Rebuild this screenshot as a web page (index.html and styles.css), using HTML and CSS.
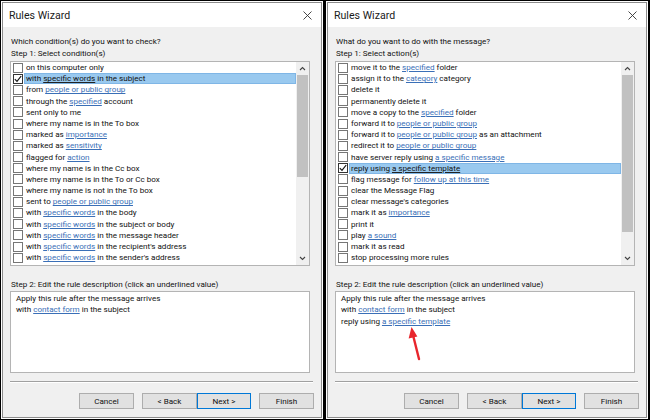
FILE: index.html
```html
<!DOCTYPE html>
<html lang="en">
<head>
    <meta charset="UTF-8">
    <title>Rules Wizard</title>
    <link rel="stylesheet" href="styles.css">
</head>
<body>
    <div class="screen">
        <div class="dialog">
            <div class="titlebar">
                <span class="title">Rules Wizard</span>
                <svg class="close" width="9" height="9" viewBox="0 0 9 9"><path d="M0.5 0.5L8.5 8.5M8.5 0.5L0.5 8.5" stroke="#333" stroke-width="0.9" fill="none"/></svg>
            </div>
            <div class="content">
                <p class="label">Which condition(s) do you want to check?</p>
                <p class="label">Step 1: Select condition(s)</p>
                <div class="listbox">
                    <ul class="items">
                        <li><span class="box"></span><span class="text">on this computer only</span></li>
                        <li class="selected"><span class="box checked"><svg width="8" height="8" viewBox="0 0 8 8"><path d="M0.8 4.2L3 6.4L7.2 1" stroke="#111" stroke-width="1.2" fill="none"/></svg></span><span class="text">with <u>specific words</u> in the subject</span></li>
                        <li><span class="box"></span><span class="text">from <a>people or public group</a></span></li>
                        <li><span class="box"></span><span class="text">through the <a>specified</a> account</span></li>
                        <li><span class="box"></span><span class="text">sent only to me</span></li>
                        <li><span class="box"></span><span class="text">where my name is in the To box</span></li>
                        <li><span class="box"></span><span class="text">marked as <a>importance</a></span></li>
                        <li><span class="box"></span><span class="text">marked as <a>sensitivity</a></span></li>
                        <li><span class="box"></span><span class="text">flagged for <a>action</a></span></li>
                        <li><span class="box"></span><span class="text">where my name is in the Cc box</span></li>
                        <li><span class="box"></span><span class="text">where my name is in the To or Cc box</span></li>
                        <li><span class="box"></span><span class="text">where my name is not in the To box</span></li>
                        <li><span class="box"></span><span class="text">sent to <a>people or public group</a></span></li>
                        <li><span class="box"></span><span class="text">with <a>specific words</a> in the body</span></li>
                        <li><span class="box"></span><span class="text">with <a>specific words</a> in the subject or body</span></li>
                        <li><span class="box"></span><span class="text">with <a>specific words</a> in the message header</span></li>
                        <li><span class="box"></span><span class="text">with <a>specific words</a> in the recipient's address</span></li>
                        <li><span class="box"></span><span class="text">with <a>specific words</a> in the sender's address</span></li>
                    </ul>
                    <div class="scrollbar">
                        <div class="arrow"><svg width="7" height="5" viewBox="0 0 7 5"><path d="M1 4L3.5 1.5L6 4" stroke="#444" stroke-width="1.1" fill="none"/></svg></div>
                        <div class="track"><div class="thumb thumb-short"></div></div>
                        <div class="arrow"><svg width="7" height="5" viewBox="0 0 7 5"><path d="M1 1L3.5 3.5L6 1" stroke="#444" stroke-width="1.1" fill="none"/></svg></div>
                    </div>
                </div>
                <p class="label step2">Step 2: Edit the rule description (click an underlined value)</p>
                <div class="description">
                    <p>Apply this rule after the message arrives</p>
                    <p>with <a>contact form</a> in the subject</p>
                </div>
                <div class="separator"></div>
                <div class="buttons">
                    <button>Cancel</button>
                    <button class="back">&lt; Back</button>
                    <button class="next">Next &gt;</button>
                    <button class="finish">Finish</button>
                </div>
            </div>
        </div>

        <div class="dialog">
            <div class="titlebar">
                <span class="title">Rules Wizard</span>
                <svg class="close" width="9" height="9" viewBox="0 0 9 9"><path d="M0.5 0.5L8.5 8.5M8.5 0.5L0.5 8.5" stroke="#333" stroke-width="0.9" fill="none"/></svg>
            </div>
            <div class="content">
                <p class="label">What do you want to do with the message?</p>
                <p class="label">Step 1: Select action(s)</p>
                <div class="listbox">
                    <ul class="items">
                        <li><span class="box"></span><span class="text">move it to the <a>specified</a> folder</span></li>
                        <li><span class="box"></span><span class="text">assign it to the <a>category</a> category</span></li>
                        <li><span class="box"></span><span class="text">delete it</span></li>
                        <li><span class="box"></span><span class="text">permanently delete it</span></li>
                        <li><span class="box"></span><span class="text">move a copy to the <a>specified</a> folder</span></li>
                        <li><span class="box"></span><span class="text">forward it to <a>people or public group</a></span></li>
                        <li><span class="box"></span><span class="text">forward it to <a>people or public group</a> as an attachment</span></li>
                        <li><span class="box"></span><span class="text">redirect it to <a>people or public group</a></span></li>
                        <li><span class="box"></span><span class="text">have server reply using <a>a specific message</a></span></li>
                        <li class="selected"><span class="box checked"><svg width="8" height="8" viewBox="0 0 8 8"><path d="M0.8 4.2L3 6.4L7.2 1" stroke="#111" stroke-width="1.2" fill="none"/></svg></span><span class="text">reply using <u>a specific template</u></span></li>
                        <li><span class="box"></span><span class="text">flag message for <a>follow up at this time</a></span></li>
                        <li><span class="box"></span><span class="text">clear the Message Flag</span></li>
                        <li><span class="box"></span><span class="text">clear message's categories</span></li>
                        <li><span class="box"></span><span class="text">mark it as <a>importance</a></span></li>
                        <li><span class="box"></span><span class="text">print it</span></li>
                        <li><span class="box"></span><span class="text">play <a>a sound</a></span></li>
                        <li><span class="box"></span><span class="text">mark it as read</span></li>
                        <li><span class="box"></span><span class="text">stop processing more rules</span></li>
                    </ul>
                    <div class="scrollbar">
                        <div class="arrow"><svg width="7" height="5" viewBox="0 0 7 5"><path d="M1 4L3.5 1.5L6 4" stroke="#444" stroke-width="1.1" fill="none"/></svg></div>
                        <div class="track"><div class="thumb thumb-long"></div></div>
                        <div class="arrow"><svg width="7" height="5" viewBox="0 0 7 5"><path d="M1 1L3.5 3.5L6 1" stroke="#444" stroke-width="1.1" fill="none"/></svg></div>
                    </div>
                </div>
                <p class="label step2">Step 2: Edit the rule description (click an underlined value)</p>
                <div class="description">
                    <p>Apply this rule after the message arrives</p>
                    <p>with <a>contact form</a> in the subject</p>
                    <p>reply using <a>a specific template</a></p>
                    <svg class="pointer" width="20" height="36" viewBox="0 0 20 36">
                        <path d="M15 33L9.5 11" stroke="#e8262d" stroke-width="2.4" stroke-linecap="round" fill="none"/>
                        <path d="M7.5 1L4.6 12.5L13.4 10.4Z" fill="#e8262d"/>
                    </svg>
                </div>
                <div class="separator"></div>
                <div class="buttons">
                    <button>Cancel</button>
                    <button class="back">&lt; Back</button>
                    <button class="next">Next &gt;</button>
                    <button class="finish">Finish</button>
                </div>
            </div>
        </div>
    </div>
</body>
</html>
```

FILE: styles.css
```css
body {
    margin: 0;
    background: #000;
    font-family: Roboto, "Noto Sans", sans-serif;
    font-size: 8.1px;
    color: #111;
}

.screen {
    display: flex;
    gap: 5px;
    padding: 2px 0 0 2px;
    width: 650px;
    height: 420px;
    box-sizing: border-box;
}

.dialog {
    width: 320px;
    height: 416px;
    box-sizing: border-box;
    border: 1px solid #8c8c8c;
    box-shadow: 0 0 0 1px #fff;
    background: #f0f0f0;
}

.titlebar {
    height: 24px;
    background: #fff;
    display: flex;
    align-items: center;
    justify-content: space-between;
    padding: 0 9px 0 6px;
}

.title {
    font-size: 10.6px;
    color: #1a1a1a;
}

.content {
    padding: 8px 7px 0 7px;
}

.label {
    margin: 0;
    line-height: 12px;
    padding-left: 1px;
}

.listbox {
    margin-top: 2px;
    width: 300px;
    height: 205px;
    box-sizing: border-box;
    border: 1px solid #b4b4b4;
    background: #fff;
    display: flex;
}

.items {
    list-style: none;
    margin: 0;
    padding: 0 0 0 1px;
    flex: 1;
}

.items li {
    height: 11.2px;
    line-height: 11.2px;
    display: flex;
    align-items: center;
    white-space: nowrap;
}

.box {
    width: 10px;
    height: 10px;
    box-sizing: border-box;
    border: 1px solid #767676;
    background: #fff;
    margin-left: 1px;
    margin-right: 1px;
    display: flex;
    align-items: center;
    justify-content: center;
}

.box.checked {
    border-color: #333;
}

.text {
    flex: 1;
    padding-left: 2px;
    height: 100%;
    box-sizing: border-box;
}

.selected .text {
    background: #99c9ef;
    outline: 1px solid #7fb6e6;
    outline-offset: -1px;
}

.selected u {
    text-decoration-color: #222;
}

a {
    color: #3a6fb7;
    text-decoration: underline;
}

.scrollbar {
    width: 13px;
    background: #f0f0f0;
    display: flex;
    flex-direction: column;
}

.arrow {
    height: 13px;
    display: flex;
    align-items: center;
    justify-content: center;
}

.track {
    flex: 1;
}

.thumb {
    margin: 0 1px;
    background: #c1c1c1;
}

.thumb-short {
    height: 102px;
}

.thumb-long {
    height: 157px;
}

.step2 {
    margin-top: 12px;
}

.description {
    position: relative;
    margin-top: 1px;
    width: 300px;
    height: 82px;
    box-sizing: border-box;
    border: 1px solid #b4b4b4;
    background: #fff;
    padding: 1px 0 0 5px;
}

.description p {
    margin: 0;
    line-height: 11.4px;
}

.pointer {
    position: absolute;
    left: 68px;
    top: 34px;
}

.separator {
    margin-top: 8px;
    width: 303px;
    height: 1px;
    background: #a0a0a0;
    border-bottom: 1px solid #fff;
}

.buttons {
    margin-top: 10px;
    display: flex;
    justify-content: flex-end;
    width: 304px;
}

button {
    width: 55px;
    height: 16px;
    padding: 0;
    border: 1px solid #adadad;
    background: #e1e1e1;
    font-family: inherit;
    font-size: 8.1px;
    color: #111;
}

.back {
    margin-left: 8px;
}

.next {
    margin-left: 0;
    width: 54px;
    border-color: #0078d7;
}

.finish {
    margin-left: 8px;
}
```
